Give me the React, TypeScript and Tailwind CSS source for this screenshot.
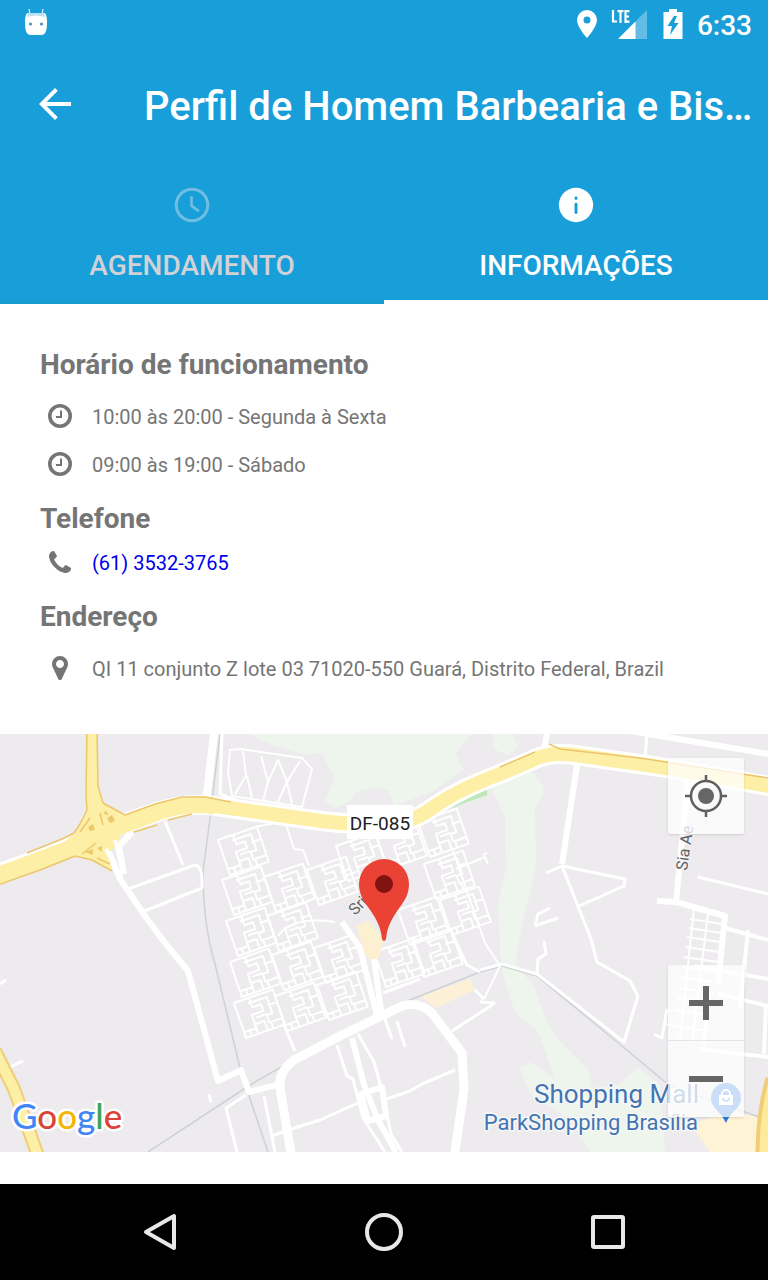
import type { ReactNode } from "react";

const hours = ["10:00 às 20:00 - Segunda à Sexta", "09:00 às 19:00 - Sábado"];

// top-left corners of the housing blocks on the map
const blocks = [
  [218, 106], [336, 112], [376, 100], [418, 88],
  [222, 146], [264, 143], [307, 136], [424, 130],
  [226, 187], [267, 182], [398, 176], [440, 166],
  [230, 228], [272, 221], [314, 214], [374, 218], [412, 208],
  [234, 269], [275, 262], [317, 251],
];

function StatusBar() {
  return (
    <div className="flex h-12 items-center justify-between pr-4 pl-6 text-white">
      <svg className="h-8 w-6" viewBox="0 0 24 32" aria-hidden="true">
        <path d="M6 7L5 1M18 7l1-6" stroke="#d5eef9" strokeWidth="1.3" fill="none" />
        <path
          d="M4 5h16q3 0 3 9t-2 11q-1 2-5 2H8q-4 0-5-2-2-2-2-11t3-9z"
          fill="#fff"
        />
        <path d="M4 5h16l1 4q-9-3-18 0z" fill="#b9e1f4" />
        <circle cx="6.500" cy="16" r="1.500" fill="#3b8fb5" />
        <circle cx="17.500" cy="16" r="1.500" fill="#3b8fb5" />
      </svg>
      <div className="flex items-center">
        <svg className="h-7 w-5" viewBox="0 0 20 28" fill="#fff" aria-hidden="true">
          <path
            fillRule="evenodd"
            d="M10 0a10 10 0 0 0-10 10c0 7 10 18 10 18s10-11 10-18A10 10 0 0 0 10 0zm0 6.500a3.500 3.500 0 1 1 0 7 3.500 3.500 0 0 1 0-7z"
          />
        </svg>
        <svg className="ml-[14px] h-8 w-10" viewBox="0 0 40 32" aria-hidden="true">
          <path d="M36 2v29H7z" fill="#64bce6" />
          <path d="M24.500 13.500V31H7z" fill="#fff" />
          <path
            d="M2 2v12.500M1 13.500h5M6.500 3.200h6M9.500 3v12M14.500 2v13M13.500 3.200h5M13.500 8.500h4.500M13.500 13.700h5"
            stroke="#fff"
            strokeWidth="2.200"
            fill="none"
          />
        </svg>
        <svg className="ml-3 h-[30px] w-5" viewBox="0 0 20 30" aria-hidden="true">
          <path d="M6 0h8v3h5.500v27H.5V3H6z" fill="#fff" />
          <path d="M11 7L4.500 17H9l-2 9 8.500-12H11l3-7z" fill="#189ed8" />
        </svg>
        <time className="ml-[14px] pt-1 text-[28px] leading-8 font-medium">6:33</time>
      </div>
    </div>
  );
}

function Header() {
  return (
    <header className="bg-[#189ed8]">
      <StatusBar />
      <div className="flex h-28 items-center pl-[31px] text-white">
        <button type="button" aria-label="Voltar" className="h-12 w-12 shrink-0">
          <svg viewBox="0 0 24 24" fill="currentColor">
            <path d="M20 11H7.830l5.590-5.590L12 4l-8 8 8 8 1.410-1.410L7.830 13H20v-2z" />
          </svg>
        </button>
        <h1 className="ml-[65px] min-w-0 truncate pt-1.5 text-[40px] leading-[52px] font-medium">
          Perfil de Homem Barbearia e Bis…
        </h1>
      </div>
      <nav className="grid h-36 grid-cols-2 text-[28px] leading-8 font-medium">
        <button
          type="button"
          className="flex flex-col items-center border-b-4 border-[#189cd4] pt-6 text-[#d2d2d6]"
        >
          <svg className="h-[42px] w-[42px]" viewBox="0 0 24 24" fill="none" stroke="#70bfe2">
            <circle cx="12" cy="12" r="9" strokeWidth="1.700" />
            <path d="M11.700 7v5.500l4.200 3" strokeWidth="1.500" />
          </svg>
          <span className="mt-6">AGENDAMENTO</span>
        </button>
        <button
          type="button"
          className="flex flex-col items-center border-b-4 border-white pt-6 text-white"
        >
          <svg className="h-[42px] w-[42px]" viewBox="0 0 24 24">
            <circle cx="12" cy="12" r="9.800" fill="#fff" />
            <path d="M12 11.500v4.800M12 8v.3" stroke="#189ed8" strokeWidth="1.700" strokeLinecap="round" />
          </svg>
          <span className="mt-6">INFORMAÇÕES</span>
        </button>
      </nav>
    </header>
  );
}

function ClockIcon() {
  return (
    <svg className="h-6 w-6" viewBox="0 0 24 24" fill="none" stroke="currentColor" aria-hidden="true">
      <circle cx="12" cy="12" r="10.200" strokeWidth="3.600" />
      <path d="M13 6.500V13H8" strokeWidth="2" />
    </svg>
  );
}

function PhoneIcon() {
  return (
    <svg className="h-[22px] w-[22px]" viewBox="0 0 1408 1408" fill="currentColor" aria-hidden="true">
      <path d="M1408 1112q0 27-10 70.500t-21 68.500q-21 50-122 106-94 51-186 51-27 0-53-3.500t-57.500-12.500-47-14.500-55.500-20.500-49-18q-98-35-175-83-127-79-264-216t-216-264q-48-77-83-175-3-9-18-49t-20.500-55.500-14.500-47-12.500-57.500-3.500-53q0-92 51-186 56-101 106-122 25-11 68.500-21t70.500-10q14 0 21 3 18 6 53 76 11 19 30 54t35 63.500 31 53.500q3 4 17.500 25t21.500 35.500 7 28.500q0 20-28.500 50t-62 55-62 53-28.500 46q0 9 5 22.500t8.500 20.500 14 24 11.500 19q76 137 174 235t235 174q2 1 19 11.500t24 14 20.500 8.500 22.500 5q18 0 46-28.500t53-62 55-62 50-28.500q14 0 28.500 7t35.500 21.500 25 17.500q25 15 53.500 31t63.500 35 54 30q70 35 76 53 3 7 3 21z" />
    </svg>
  );
}

function MarkerIcon() {
  return (
    <svg className="h-6 w-4" viewBox="0 0 1024 1536" fill="currentColor" aria-hidden="true">
      <path d="M768 512q0-106-75-181t-181-75-181 75-75 181 75 181 181 75 181-75 75-181zm256 0q0 109-33 179l-364 774q-16 33-47.500 52t-67.500 19-67.500-19-46.500-52L33 691Q0 621 0 512 0 300 150 150T512 0t362 150 150 362z" />
    </svg>
  );
}

function InfoRow({ icon, children }: { icon: ReactNode; children: ReactNode }) {
  return (
    <div className="flex h-12 items-center">
      <span className="flex w-10 shrink-0 justify-center pb-0.5">{icon}</span>
      <span className="ml-3 text-xl leading-6">{children}</span>
    </div>
  );
}

function MapCanvas() {
  const mainRoad =
    "M-5 141L80 110L120 91L160 77Q190 68 215 72L300 84Q350 92 390 90Q415 88 435 72Q460 55 500 40L535 25Q550 18 575 21L660 33L775 53";
  return (
    <svg
      className="block h-[418px] w-full"
      viewBox="0 0 768 418"
      preserveAspectRatio="xMidYMid slice"
      fill="none"
      strokeLinejoin="round"
      role="img"
      aria-label="Mapa"
    >
      <defs>
        <path
          id="block"
          d="M0 0H41V37H0ZM16 0V10H25V17H13V27H23V37M20 5H33V22H27V30H41M13 17V31H0M31 13H41M16 21H27M6 31V37M13 31V37M29 30V37M13 5H20"
        />
      </defs>
      <rect width="768" height="418" fill="#eeebee" />

      {/* parks */}
      <g fill="#edf5ed">
        <path d="M248 0L275 12L305 21L322 19L334 43L331 53L325 67L336 74L348 68L356 58L374 53L389 57L394 72L410 66L432 58L464 35L455 20L472 0z" />
        <path d="M493 0H513L518 13L508 22L494 15z" />
        <path d="M490 52L530 34L544 53L543 62L535 73L536 130L530 160L522 190L518 214L515 232L533 250L545 282L555 302L578 325L588 335L592 355L620 350L638 333L660 351L665 418H590L570 385L530 360L520 334L530 328L555 345L545 316L538 298L515 278L502 238L500 210L498 170L506 135L505 82z" />
      </g>
      <path d="M443 71L487 52V61L462 70L444 77z" fill="#bde9b7" />
      <path d="M420 262L470 245L475 256L436 274z" fill="#fcf0d6" />
      <path d="M690 390L730 378L768 385V418H710z" fill="#fff3d5" />

      {/* railway */}
      <g stroke="#cdd2d5" strokeWidth="1.500">
        <path d="M220 0L210 84L203 138Q203 190 215 230L241 338L268 418" />
        <path d="M148 418L250 351L340 299L405 268L480 238L502 232L537 242L622 312L670 352L768 386" />
      </g>

      {/* housing blocks */}
      <g stroke="#fff" strokeWidth="2">
        {blocks.map(([x, y]) => (
          <use key={`${x}-${y}`} href="#block" transform={`translate(${x} ${y}) rotate(-19)`} />
        ))}
        <path d="M255 93L285 87L294 115L303 116L309 132M278 202Q292 182 335 188M453 117L485 209L500 232L484 265M456 135L485 123L488 130M483 121L487 119" />
        <path d="M230 16L240 15L302 24L312 35L302 73L264 67L232 62L228 38z" />
        <path d="M243 17L246 42L235 60M247 42L252 64M261 22L268 48L278 26L287 48L277 70M268 48L263 67M287 48L300 27M287 48L292 70" />
      </g>
      <path d="M356 192L368 186L384 206L376 230L366 222z" fill="#fdf0d0" />

      {/* local streets */}
      <g stroke="#fff" strokeWidth="3">
        <path d="M222 0L220 60L240 68M165 87L183 131M128 155L195 131Q203 132 202 154L142 178" />
        <path d="M0 250L6 246M8 334L23 327M211 368L209 360M283 289L295 317M237 418L226 374L246 361M264 362L275 418M272 402L288 396L320 386L331 381L358 369M384 366L410 357L422 350L455 336" />
        <path d="M337 311L347 342L353 345L363 384L385 418M358 300L374 328L381 353L391 400L402 418M385 285L392 305M397 287L405 313" />
        <path d="M452 297L495 269M480 238L467 231L452 200M383 259L420 245" />
        <path d="M480 236L502 230L537 240L624 308L638 262L630 247L597 228L591 205L562 132L546 139M562 132L625 145L624 152L579 172M537 240L538 225L546 220L544 207" />
        <path d="M535 192L558 184M535 192L538 180L550 174M647 0L645 25M698 143L768 160M654 300L662 304L667 275" />
        <path d="M480 268L495 269M475 256L484 265" />
      </g>
      <g stroke="#fff" strokeWidth="6">
        <path d="M214 0L206 68" strokeWidth="8" />
        <path d="M106 111L120 145L145 182L165 209L188 237L218 347L241 336L249 358L280 350M130 100L119 112L124 140M116 105L124 140" />
        <path d="M577 31L562 130M688 45L676 168M657 167L676 168L725 182L718 250M544 15L547 0M630 -3L768 20" />
        <path d="M725 194L768 206M748 196L740 275M694 232L768 245M718 260L768 272M698 315L768 323M710 254L704 310M766 270L764 320" strokeWidth="4" />
        <path d="M342 188L360 214L369 250L378 286M374 225L382 284" />
        <path d="M352 304L364 351L378 386L396 418M361 360L382 353L386 382L368 387z" />
      </g>
      <path
        d="M292 425L280 354Q278 338 294 326L340 302L402 272Q418 267 432 279L462 319L464 355L454 425"
        stroke="#fff"
        strokeWidth="9"
      />
      <g stroke="#fff" strokeWidth="2">
        <path d="M694 175L680 305M708 180L692 308M690 185L722 190M689 194L721 199M687 203L720 208M686 213L719 218M684 223L718 228M682 233L716 238M680 243L715 248M678 254L713 259M677 264L711 269M675 276L709 281M665 290L706 297" />
      </g>

      {/* highways */}
      <path d={mainRoad} stroke="#fff" strokeWidth="20" />
      <path d={mainRoad} stroke="#fdf0a6" strokeWidth="14" />
      <path d="M-5 143L80 111L120 92L160 77Q190 68 215 72" stroke="#fdf0a6" strokeWidth="17" />
      <path
        d="M86 -5H97L98 52L103 69L125 82L118 110L108 120L112 137L92 126L75 121L50 120L75 99L87 78L86 60z"
        fill="#fdf0a6"
      />
      <g stroke="#edc66c" strokeWidth="1.500">
        <path d="M87 -5L86 60L87 76L80 90L74 99L62 105L27 119M97 -5L98 52L103 69L125 81L155 70L182 63L205 63L231 68" />
        <path d="M-5 152L40 136L75 122L92 126L112 137M134 98L157 91M168 86L192 80M500 33L535 18M549 10L560 15L640 24L768 44" />
        <path d="M80 98L90 84M100 79L103 91M82 120L96 109M97 124L110 130" />
      </g>
      <path d="M88 93l5-3 2 6-5 1zM107 84l5-3 3 6-5 2zM85 118l8-3 0 6zM97 114l5-2 0 6zM105 76l-1 4 5 1z" fill="#ecc96c" />
      <path d="M106 115L122 145M115 106L125 140M133 99L120 112" stroke="#fff" strokeWidth="4" />
      <path d="M-5 317L14 355L38 422" stroke="#f0cd76" strokeWidth="14" />
      <path d="M-5 317L14 355L38 422" stroke="#fdf0a6" strokeWidth="10" />
      <path d="M772 345Q762 378 762 422" stroke="#f0cd76" strokeWidth="13" />
      <path d="M774 345Q764 378 764 422" stroke="#fdeb9c" strokeWidth="9" />

      {/* labels */}
      <rect x="347" y="71" width="66" height="34" fill="#fff" />
      <g fontFamily="Roboto, sans-serif">
        <text x="380" y="96" fontSize="19" textAnchor="middle" fill="#222">
          DF-085
        </text>
        <g fill="#5f6368" fontSize="16" stroke="#f6f4f6" strokeWidth="2" paintOrder="stroke">
          <text transform="translate(355 182) rotate(-45)">Sri</text>
          <text transform="translate(687 137) rotate(-82)">Sia Ae</text>
        </g>
        <g fill="#4374b0" stroke="#f6f7f8" strokeWidth="3" paintOrder="stroke" textAnchor="end">
          <text x="699" y="369" fontSize="26">
            Shopping Mall
          </text>
          <text x="698" y="396" fontSize="22">
            ParkShopping Brasília
          </text>
        </g>
      </g>

      {/* shop pin */}
      <path d="M726 349a15 15 0 0 0-15 15c0 10 9 12 15 25 6-13 15-15 15-25a15 15 0 0 0-15-15z" fill="#2f7be0" />
      <path d="M719 361h14v10h-14z" fill="#fff" />
      <path d="M722 362v-2a4 4 0 0 1 8 0v2" stroke="#fff" strokeWidth="2" />
      <path d="M723 364a3 3 0 0 0 6 0" stroke="#2f7be0" strokeWidth="1.500" />

      {/* place marker */}
      <path
        d="M384 125a25 25 0 0 0-25 25c0 10 4 16 9 23 8 11 13 20 14 32q2 4 4 0c1-12 6-21 14-32 5-7 9-13 9-23a25 25 0 0 0-25-25z"
        fill="#ea4335"
      />
      <circle cx="384" cy="150" r="9" fill="#811411" />

      <text
        x="12"
        y="395"
        fontFamily="Lato, sans-serif"
        fontSize="35"
        fontWeight="500"
        stroke="#fff"
        strokeWidth="5"
        paintOrder="stroke"
      >
        <tspan fill="#4285f4">G</tspan>
        <tspan fill="#db4437">o</tspan>
        <tspan fill="#f4b400">o</tspan>
        <tspan fill="#4285f4">g</tspan>
        <tspan fill="#3aa757">l</tspan>
        <tspan fill="#db4437">e</tspan>
      </text>
    </svg>
  );
}

function MapPanel() {
  return (
    <section className="relative">
      <MapCanvas />
      <button
        type="button"
        aria-label="Minha localização"
        className="absolute top-6 right-6 flex h-[76px] w-[76px] items-center justify-center rounded-xs bg-white/75 shadow"
      >
        <svg className="h-[42px] w-[42px]" viewBox="0 0 42 42" fill="none" stroke="#5f5f5f">
          <circle cx="21" cy="21" r="15" strokeWidth="2.500" />
          <circle cx="21" cy="21" r="8" fill="#666" stroke="none" />
          <path d="M21 0v7M21 35v7M0 21h7M35 21h7" strokeWidth="2.500" />
        </svg>
      </button>
      <div className="absolute right-6 bottom-[35px] flex w-[76px] flex-col divide-y divide-gray-300/60 rounded-xs bg-white/75 shadow">
        <button type="button" aria-label="Aumentar zoom" className="flex h-[76px] items-center justify-center">
          <svg className="h-[34px] w-[34px]" viewBox="0 0 34 34" stroke="#666" strokeWidth="6">
            <path d="M17 0v34M0 17h34" />
          </svg>
        </button>
        <button type="button" aria-label="Diminuir zoom" className="flex h-[76px] items-center justify-center">
          <svg className="h-[34px] w-[34px]" viewBox="0 0 34 34" stroke="#666" strokeWidth="6">
            <path d="M0 17h34" />
          </svg>
        </button>
      </div>
    </section>
  );
}

function SystemNav() {
  return (
    <nav className="mt-auto grid h-24 grid-cols-3 items-center justify-items-center bg-black px-12">
      <button type="button" aria-label="Voltar ao anterior">
        <svg className="h-10 w-10" viewBox="0 0 40 40" fill="none" stroke="#e8e8e8" strokeWidth="4" strokeLinejoin="round">
          <path d="M34 4v32L6 20z" />
        </svg>
      </button>
      <button type="button" aria-label="Início">
        <svg className="h-10 w-10" viewBox="0 0 40 40" fill="none" stroke="#e8e8e8" strokeWidth="4">
          <circle cx="20" cy="20" r="17" />
        </svg>
      </button>
      <button type="button" aria-label="Recentes">
        <svg className="h-10 w-10" viewBox="0 0 40 40" fill="none" stroke="#e8e8e8" strokeWidth="4">
          <rect x="5" y="5" width="30" height="30" rx="1" />
        </svg>
      </button>
    </nav>
  );
}

export default function App() {
  return (
    <div className="flex min-h-screen flex-col bg-white font-[Roboto,sans-serif]">
      <Header />
      <main className="pb-8">
        <div className="px-10 py-[41px] text-[#757575]">
          <h2 className="text-[28px] leading-10 font-bold">Horário de funcionamento</h2>
          <div className="mt-2">
            {hours.map((item) => (
              <InfoRow key={item} icon={<ClockIcon />}>
                {item}
              </InfoRow>
            ))}
          </div>
          <h2 className="mt-[10px] text-[28px] leading-10 font-bold">Telefone</h2>
          <InfoRow icon={<PhoneIcon />}>
            <a href="tel:+556135323765" className="text-[#0000ee]">
              (61) 3532-3765
            </a>
          </InfoRow>
          <h2 className="mt-[10px] text-[28px] leading-10 font-bold">Endereço</h2>
          <div className="mt-2">
            <InfoRow icon={<MarkerIcon />}>
              QI 11 conjunto Z lote 03 71020-550 Guará, Distrito Federal, Brazil
            </InfoRow>
          </div>
        </div>
        <MapPanel />
      </main>
      <SystemNav />
    </div>
  );
}
